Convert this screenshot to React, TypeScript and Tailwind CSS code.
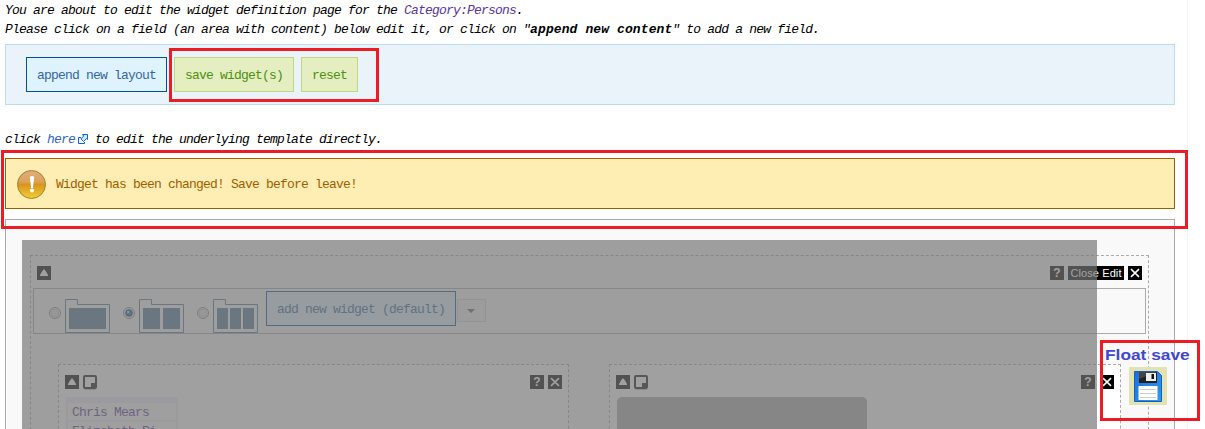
import React from "react";

const sq = "relative flex h-[14px] w-[14px] shrink-0 items-center justify-center bg-black text-white";

function Up() {
  return (
    <span className={sq}>
      <svg width="14" height="14" viewBox="0 0 14 14">
        <path d="M7 3 L9 5.5 L11 9 V10 H3 V9 L5 5.5 Z" fill="#fff" />
      </svg>
    </span>
  );
}

function Close() {
  return (
    <span className={sq}>
      <svg width="14" height="14" viewBox="0 0 14 14">
        <path d="M3 3.2 L11 10.8 M11 3.2 L3 10.8" stroke="#fff" strokeWidth="1.6" />
      </svg>
    </span>
  );
}

function Help() {
  return <span className={sq + " font-['Liberation_Sans'] text-[12px] font-bold leading-[14px] tracking-normal"}>?</span>;
}

function Page() {
  return (
    <svg width="14" height="15" viewBox="0 0 14 15" className="shrink-0">
      <rect x="1" y="1" width="12" height="12" rx="1" fill="#fff" stroke="#111" strokeWidth="2" />
      <rect x="8" y="8" width="5" height="5" fill="#111" />
      <path d="M1 14.5 H13" stroke="#bbb" />
    </svg>
  );
}

function Radio({ on = false }: { on?: boolean }) {
  return (
    <svg width="12" height="12" viewBox="0 0 12 12" className="mt-[18px] shrink-0">
      <circle cx="6" cy="6" r="5.5" fill="#f4f4f4" stroke="#8a8a8a" />
      <circle cx="6" cy="6" r="3.8" fill="#e2e2e2" stroke="#c9c9c9" />
      {on && <circle cx="6" cy="6" r="3.2" fill="#2076a8" stroke="#103c5c" />}
      {on && <circle cx="5.2" cy="5" r="1.2" fill="#9fe0f5" />}
    </svg>
  );
}

function Folder({ bars }: { bars: number[][] }) {
  return (
    <svg width="45" height="34" viewBox="0 0 45 34" className="ml-1 mt-[10px] shrink-0">
      <path d="M.5 33.5 V.5 H12.5 V5.5 H44.5 V33.5 Z" fill="none" stroke="#507598" />
      {bars.map(([x, w]) => (
        <rect key={x} x={x} y="9" width={w} height="21" fill="#507598" />
      ))}
    </svg>
  );
}

function WidgetBox({ className, tools, children }: { className: string; tools: string; children: React.ReactNode }) {
  return (
    <div className={"h-[90px] shrink-0 border border-b-0 border-dashed border-[#aaa] bg-white px-[6px] pt-[10px] " + className}>
      <div className="flex h-[15px] items-start">
        <div className="flex gap-1">
          <Up />
          <Page />
        </div>
        <div className={"ml-auto flex " + tools}>
          <Help />
          <Close />
        </div>
      </div>
      {children}
    </div>
  );
}

export default function App() {
  return (
    <div className="relative h-[429px] w-[1205px] overflow-hidden bg-white font-['Liberation_Mono',monospace] text-[13px] leading-[19px] tracking-[-0.8px] whitespace-pre text-black">
      <div className="h-full w-[1188px] border-r border-[#f4f4f4] pl-[5px]">
        <div className="flex h-[44px] flex-col pt-[1px] italic">
          <p>
            You are about to edit the widget definition page for the <a className="text-[#5a3696]">Category:Persons</a>.
          </p>
          <p>
            Please click on a field (an area with content) below edit it, or click on "<b className="tracking-[0.1px]">append new content</b>" to add a new field.
          </p>
        </div>

        <div className="flex h-[61px] w-[1170px] gap-[7px] border border-[#b6ddf0] bg-[#eaf3fa] pl-5 pt-3">
          <button className="h-[35px] w-[141px] border border-[#005294] bg-[#dff3ff] pt-[2px] text-[#336699]">append new layout</button>
          <button className="h-[35px] w-[120px] border border-[#c0d880] bg-[#e5eec1] pt-[2px] text-[#4c9010]">save widget(s)</button>
          <button className="h-[35px] w-[57px] border border-[#c0d880] bg-[#e5eec1] pt-[2px] text-[#4c9010]">reset</button>
        </div>

        <p className="mt-[25px] flex h-[19px] items-center italic">
          <span>click </span>
          <a className="text-[#3366bb]">here</a>
          <svg width="11" height="11" viewBox="0 0 11 11" className="ml-[3px] mr-[-1px]">
            <path d="M3 3.5 H.5 V9.5 H6.5 V8" fill="#fff" stroke="#0664e0" />
            <path d="M4.5 .5 H9.5 V5.5 L8.4 4.6 L5.5 7.5 L2.9 5 L5.6 2 Z" fill="#cfe6ff" stroke="#0664e0" />
          </svg>
          <span> to edit the underlying template directly.</span>
        </p>

        <div className="mt-[9px] flex h-[51px] w-[1170px] items-center border border-[#9c6000] bg-[#feeeb3] pl-[11px] text-[#9c6000]">
          <svg width="29" height="29" viewBox="0 0 29 29" className="mr-[10px] mt-[1px]">
            <defs>
              <linearGradient id="warn" x1="0" y1="0" x2="0" y2="1">
                <stop offset="0" stopColor="#dfae80" />
                <stop offset=".4" stopColor="#dda258" />
                <stop offset=".5" stopColor="#d8941e" />
                <stop offset="1" stopColor="#efd038" />
              </linearGradient>
            </defs>
            <circle cx="14.5" cy="14.5" r="14" fill="url(#warn)" stroke="#a5822e" />
            <path d="M12.8 7 Q15 4.8 17.2 7 L15.9 18 H14.1 Z" fill="#fff" />
            <circle cx="15" cy="20.5" r="2" fill="#fff" />
          </svg>
          <span className="pt-[1px]">Widget has been changed! Save before leave!</span>
        </div>

        <div className="mt-[10px] h-[220px] w-[1170px] border border-[#aaa] bg-[#f9f9f9] pl-6 pt-[35px]">
          <div className="h-[190px] w-[1119px] border border-dashed border-[#aaa] pt-[10px]">
            <div className="flex h-[14px] justify-between px-[6px]">
              <Up />
              <div className="flex gap-1">
                <Help />
                <span className="h-[14px] w-[56px] bg-black text-center font-['Liberation_Sans'] text-[11px] leading-[14px] tracking-[0.1px] text-white">Close Edit</span>
                <Close />
              </div>
            </div>

            <div className="ml-[2px] mt-2 flex h-[46px] w-[1113px] border border-[#aaa] pl-[15px]">
              <Radio />
              <Folder bars={[[4, 37]]} />
              <div className="w-[13px]" />
              <Radio on />
              <Folder bars={[[4, 17], [24, 17]]} />
              <div className="w-[13px]" />
              <Radio />
              <Folder bars={[[4, 11], [17, 11], [30, 11]]} />
              <button className="ml-2 mt-[2px] h-[35px] w-[190px] border border-[#005294] bg-[#dff3ff] pt-[2px] text-[#336699]">add new widget (default)</button>
              <div className="ml-[1px] mt-[10px] flex h-[23px] w-[29px] items-center justify-center border border-[#d3d3d3] bg-[#f0f0f0] pr-[2px]">
                <svg width="8" height="4" viewBox="0 0 8 4">
                  <path d="M0 0 H8 L4 4 Z" fill="#666" />
                </svg>
              </div>
            </div>

            <div className="ml-[27px] mt-[30px] flex gap-10">
              <WidgetBox className="w-[511px]" tools="gap-1">
                <div className="ml-[1px] mt-[7px] h-[40px] w-[112px] bg-[#efeffc] px-[2px] pt-[6px]">
                  <div className="h-[17px] bg-[#fcfcff] pl-1 leading-[19px] text-[#5a3696]">Chris Mears</div>
                  <div className="mt-[2px] h-[17px] bg-[#fcfcff] pl-1 leading-[19px] text-[#5a3696]">Elizabeth Ri</div>
                </div>
              </WidgetBox>
              <WidgetBox className="w-[512px]" tools="gap-[5px]">
                <div className="ml-[1px] mt-[7px] h-[50px] w-[250px] rounded-t-[5px] bg-[#aaa]" />
              </WidgetBox>
            </div>
          </div>
        </div>
      </div>

      <div className="absolute left-[22px] top-[240px] h-[189px] w-[1075px] bg-[rgba(118,118,118,0.695)]" />
      <div className="absolute left-[169px] top-[48px] h-[54px] w-[210px] border-[3px] border-[#ed1c24]" />
      <div className="absolute left-[1px] top-[150px] h-[79px] w-[1187px] border-[3px] border-[#ed1c24]" />
      <div className="absolute left-[1100px] top-[340px] flex h-[81px] w-[100px] flex-col border-[3px] border-[#ed1c24] pl-[2px] pt-[3px]">
        <span className="w-[73px] origin-left scale-x-[1.155] font-['Liberation_Sans'] text-[15px] font-bold leading-[18px] tracking-normal text-[#3f48cc]">Float save</span>
        <div className="ml-6 mt-[3px] flex h-[38px] w-[38px] items-center justify-center bg-[#e2e2b2]">
          <svg width="28" height="31" viewBox="0 0 28 31">
            <defs>
              <linearGradient id="disk" x1="0" y1="0" x2="1" y2="1">
                <stop offset="0" stopColor="#1f6fd6" />
                <stop offset="1" stopColor="#2a9af5" />
              </linearGradient>
            </defs>
            <path d="M.5 .5 H23.5 L27.5 4.5 V30.5 H.5 Z" fill="url(#disk)" stroke="#1560bd" />
            <path d="M5 1 H23 V12 H5 Z" fill="#222" />
            <path d="M5 1 H23 L5 8 Z" fill="#444" />
            <rect x="12" y="2" width="10" height="8" fill="#eee" />
            <rect x="17.5" y="3" width="2.5" height="5" fill="#111" />
            <rect x="4.5" y="15" width="19" height="14" fill="#fff" />
            <path d="M6 18.5 H22 M6 22.5 H22 M6 26.5 H22" stroke="#ccc" />
          </svg>
        </div>
      </div>
    </div>
  );
}
